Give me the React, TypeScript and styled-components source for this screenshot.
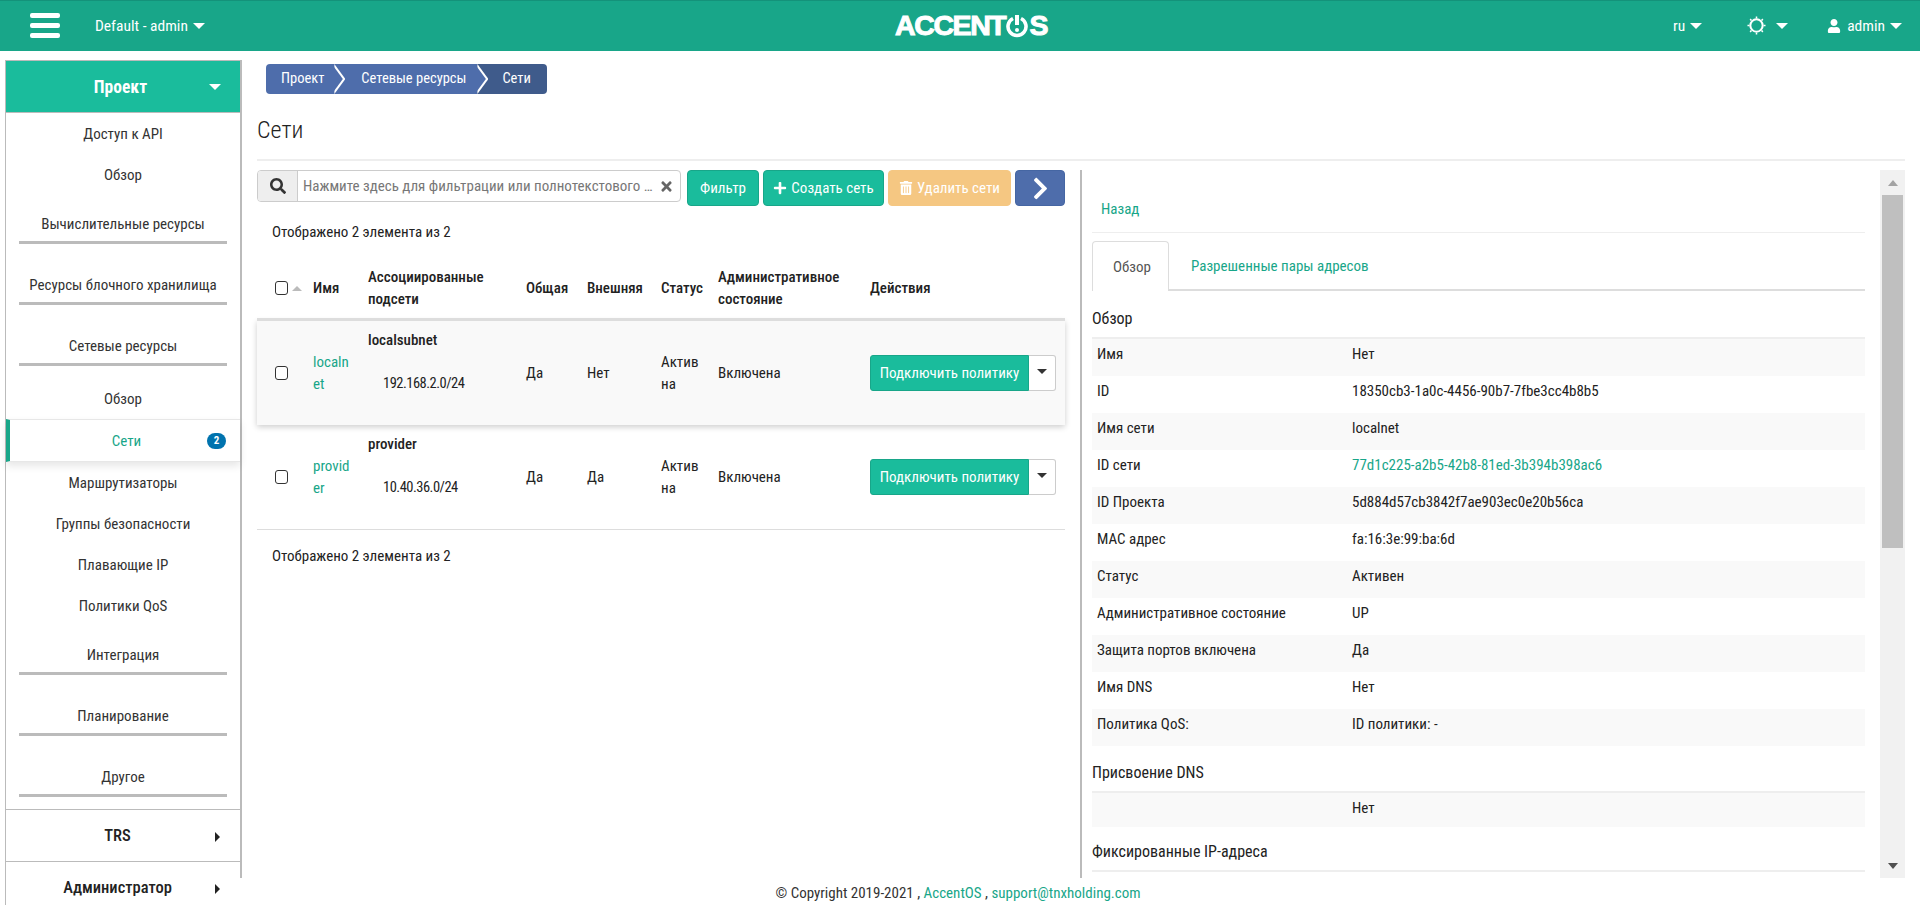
import styled, { createGlobalStyle } from "styled-components";
import { FaChevronRight, FaPlus, FaSearch, FaTimes, FaTrashAlt, FaUser } from "react-icons/fa";

const GlobalStyle = createGlobalStyle`
  html, body {
    margin: 0;
    height: 100%;
    overflow: hidden;
    background: #fff;
    color: #222;
    font-family: "Roboto Condensed", Roboto, "Liberation Sans", sans-serif;
    font-size: 15px;
    line-height: 22px;
  }
  * { box-sizing: border-box; }
  #root { height: 100%; }
`;

const Page = styled.div`
  height: 905px;
  display: flex;
  flex-direction: column;
  overflow: hidden;
`;

const TopBar = styled.header`
  height: 51px;
  flex: none;
  background: #18a689;
  border-top: 1px solid #14927a;
  color: #fff;
  display: grid;
  grid-template-columns: 1fr auto 1fr;
  align-items: center;
  padding: 0 18px 1px 30px;
`;

const TopLeft = styled.div`
  display: flex;
  align-items: center;
`;

const Burger = styled.div`
  width: 30px;
  display: flex;
  flex-direction: column;
  gap: 5px;
  margin-right: 35px;

  span {
    height: 5px;
    border-radius: 2px;
    background: #fff;
  }
`;

const TopText = styled.span<{ $gap?: number }>`
  font-size: 15.5px;
  margin-left: ${({ $gap }) => $gap ?? 0}px;
`;

const Caret = styled.i<{ $size?: number; $color?: string; $gap?: number }>`
  display: inline-block;
  margin-left: ${({ $gap }) => $gap ?? 5}px;
  border-left: ${({ $size }) => $size ?? 6}px solid transparent;
  border-right: ${({ $size }) => $size ?? 6}px solid transparent;
  border-top: ${({ $size }) => $size ?? 6}px solid ${({ $color }) => $color ?? "#fff"};
`;

const Logo = styled.div`
  display: flex;
  align-items: center;
  margin-left: 10px;
  font-family: "Liberation Sans", sans-serif;
  font-weight: 700;
  font-size: 28.5px;
  letter-spacing: -1.4px;
  line-height: 1;
  -webkit-text-stroke: 1px #fff;
`;

const TopRight = styled.div`
  display: flex;
  justify-content: flex-end;
  align-items: center;
`;

const TopMenu = styled.div<{ $gap: number }>`
  display: flex;
  align-items: center;
  margin-left: ${({ $gap }) => $gap}px;
`;

const Body = styled.div`
  flex: 1;
  min-height: 0;
  display: flex;
`;

const Sidebar = styled.nav`
  width: 237px;
  flex: none;
  margin: 9px 0 0 5px;
  border: 1px solid #bbb;
  border-width: 1px 2px 0 1px;
  color: #333;
  text-align: center;
`;

const SideHead = styled.div`
  height: 51px;
  background: #1abc9c;
  color: #fff;
  font-size: 17.5px;
  font-weight: 700;
  display: flex;
  align-items: center;
  justify-content: center;
  position: relative;
  border-bottom: 1px solid #bbb;
  padding-right: 5px;
  box-sizing: content-box;

  i {
    position: absolute;
    right: 19px;
    top: 23px;
  }
`;

const SideItem = styled.div<{ $active?: boolean }>`
  height: ${({ $active }) => ($active ? 43 : 41)}px;
  display: flex;
  align-items: center;
  justify-content: center;
  position: relative;
  ${({ $active }) =>
    $active &&
    `
    color: #18a689;
    border-left: 4px solid #18a689;
    border-top: 1px solid #e7e7e7;
    border-bottom: 1px solid #e7e7e7;
    box-shadow: 0 4px 8px rgba(0, 0, 0, 0.1);
    padding-left: 3px;
  `}
`;

const Badge = styled.span`
  position: absolute;
  right: 14px;
  top: 13px;
  width: 19px;
  height: 16px;
  border-radius: 8px;
  background: #0073ae;
  color: #fff;
  font-size: 11px;
  font-weight: 700;
  line-height: 16px;
`;

const SideGroup = styled.div`
  height: 61px;
  padding-top: 18px;

  span {
    display: block;
    margin: 0 13px;
    padding-bottom: 6px;
    border-bottom: 3px solid #bbb;
  }
`;

const SideSection = styled.div`
  height: 52px;
  padding-right: 11px;
  border-top: 1px solid #bbb;
  font-size: 16.5px;
  font-weight: 500;
  color: #222;
  display: flex;
  align-items: center;
  justify-content: center;
  position: relative;

  i {
    position: absolute;
    right: 20px;
    top: 22px;
    width: 0;
    height: 0;
    border-top: 5px solid transparent;
    border-bottom: 5px solid transparent;
    border-left: 5px solid #222;
  }
`;

const MainColumn = styled.div`
  flex: 1;
  min-width: 0;
  display: flex;
  flex-direction: column;
`;

const Content = styled.main`
  flex: 1;
  min-height: 0;
  padding: 13px 15px 0;
  display: flex;
  flex-direction: column;
`;

const Crumbs = styled.div`
  display: flex;
  height: 30px;
  margin-left: 9px;
  font-size: 14.5px;
`;

const Crumb = styled.div<{ $left: number; $right: number; $last?: boolean }>`
  position: relative;
  padding: 0 ${({ $right }) => $right}px 0 ${({ $left }) => $left}px;
  background: ${({ $last }) => ($last ? "#3f5b8b" : "#4e6dab")};
  color: #fff;
  line-height: 30px;
  &:first-child { border-radius: 4px 0 0 4px; z-index: 2; }
  &:nth-child(2) { z-index: 1; }
  &:last-child { border-radius: 0 4px 4px 0; }

  ${({ $last }) =>
    !$last &&
    `
    &::before, &::after {
      content: "";
      position: absolute;
      top: 0;
      width: 11px;
      height: 30px;
      clip-path: polygon(0 0, 100% 50%, 0 100%);
    }
    &::before {
      left: 100%;
      background: #fff;
    }
    &::after {
      left: calc(100% - 2.5px);
      background: #4e6dab;
    }
  `}
`;

const Title = styled.h1`
  margin: 22px 0 0;
  padding-bottom: 15px;
  border-bottom: 2px solid #eee;
  font-size: 24px;
  font-weight: 300;
  line-height: 28px;
  color: #222;
`;

const Split = styled.div`
  flex: 1;
  min-height: 0;
  display: flex;
  padding-top: 9px;
`;

const ListPane = styled.section`
  width: 808px;
  flex: none;
  margin-right: 15px;
`;

const Toolbar = styled.div`
  display: flex;
  gap: 4px;
  align-items: flex-start;
`;

const SearchBox = styled.div`
  width: 424px;
  height: 32px;
  margin-right: 2px;
  flex: none;
  display: flex;
  align-items: center;
  border: 1px solid #ccc;
  border-radius: 4px;
  background: #fff;

  svg {
    flex: none;
  }
`;

const SearchAddon = styled.div`
  width: 40px;
  height: 100%;
  flex: none;
  display: flex;
  align-items: center;
  justify-content: center;
  background: #eee;
  border-right: 1px solid #ccc;
  border-radius: 3px 0 0 3px;
  color: #333;
`;

const SearchInput = styled.input`
  flex: 1;
  min-width: 0;
  height: 100%;
  border: 0;
  outline: 0;
  padding: 0 6px 0 5px;
  background: transparent;
  font: inherit;
  text-overflow: ellipsis;

  &::placeholder {
    color: #777;
    opacity: 1;
  }
`;

const ClearIcon = styled(FaTimes)`
  color: #666;
  margin-right: 6px;
`;

const Btn = styled.button<{ $bg?: string; $line?: string; $w: number }>`
  width: ${({ $w }) => $w}px;
  height: 36px;
  padding: 0;
  flex: none;
  display: inline-flex;
  align-items: center;
  justify-content: center;
  gap: 4px;
  background: ${({ $bg }) => $bg ?? "#1abc9c"};
  border: 1px solid ${({ $line }) => $line ?? "#18a689"};
  border-radius: 4px;
  color: #fff;
  font: inherit;
`;

const CountLine = styled.div<{ $top: number }>`
  margin: ${({ $top }) => $top}px 0 15px 15px;
`;

const NetTable = styled.table`
  width: 808px;
  table-layout: fixed;
  border-collapse: collapse;
  border-bottom: 1px solid #ddd;

  th {
    padding: 8px;
    text-align: left;
    font-weight: 500;
    vertical-align: middle;
  }

  td {
    padding: 8px;
    vertical-align: middle;
    word-break: break-all;
  }
`;

const NetRow = styled.tr<{ $hover?: boolean }>`
  ${({ $hover }) =>
    $hover &&
    `
    background: #f9f9f9;
    border-top: 3px solid #ddd;
    box-shadow: 0 2px 6px rgba(0, 0, 0, 0.2);
  `}
`;

const Check = styled.input.attrs({ type: "checkbox" })`
  appearance: none;
  display: block;
  flex: none;
  width: 13px;
  height: 14px;
  margin: 0;
  border: 1.5px solid #333;
  border-radius: 3px;
  background: #fff;
`;

const CheckHead = styled.div`
  display: flex;
  align-items: center;
  gap: 4px;
  padding-left: 10px;
  margin-right: -10px;
`;

const CheckCell = styled.div`
  padding-left: 10px;
`;

const SortUp = styled.i`
  flex: none;
  width: 0;
  height: 0;
  border-left: 5px solid transparent;
  border-right: 5px solid transparent;
  border-bottom: 5px solid #bbb;
`;

const GreenLink = styled.a`
  color: #18a689;
`;

const SubnetName = styled.div`
  font-weight: 500;
`;

const SubnetAddr = styled.div`
  margin: 22px 0 22px 15px;
  font-size: 14.5px;
  letter-spacing: -0.5px;
`;

const ActionGroup = styled.div`
  display: flex;
  width: 186px;
  height: 36px;
`;

const ActionMain = styled.button`
  width: 159px;
  height: 36px;
  background: #1abc9c;
  border: 1px solid #18a689;
  border-radius: 3px 0 0 3px;
  color: #fff;
  font: inherit;
  padding: 0;
`;

const ActionToggle = styled.button`
  flex: 1;
  background: #fff;
  border: 1px solid #ccc;
  border-left: 0;
  border-radius: 0 3px 3px 0;
  padding: 0 0 4px;
  display: flex;
  align-items: center;
  justify-content: center;
`;

const DetailPane = styled.section`
  flex: 1;
  min-width: 0;
  display: flex;
  border-left: 2px solid #bbb;
  padding-left: 10px;
`;

const DetailBody = styled.div`
  flex: 1;
  min-width: 0;
  overflow: hidden;
  margin-right: 15px;
  padding-top: 28px;
`;

const BackLink = styled.a`
  display: block;
  color: #18a689;
  padding: 0 0 12px 9px;
  border-bottom: 1px solid #eee;
`;

const Tabs = styled.div`
  display: flex;
  height: 50px;
  margin-top: 8px;
  border-bottom: 2px solid #ddd;
`;

const Tab = styled.div<{ $active?: boolean }>`
  height: 50px;
  padding: 14px 22px 0;
  ${({ $active }) =>
    $active
      ? `
    color: #555;
    background: #fff;
    border: 1px solid #ddd;
    border-bottom: 0;
    border-radius: 4px 4px 0 0;
    width: 77px;
    padding-left: 20px;
    padding-right: 0;
  `
      : "color: #18a689;"}
`;

const SectionTitle = styled.h3<{ $top: number }>`
  margin: ${({ $top }) => $top}px 0 7px;
  font-size: 16px;
  font-weight: 400;
  line-height: 22px;
  color: #222;
`;

const Rows = styled.div`
  border-top: 2px solid #eee;
`;

const InfoRow = styled.div<{ $short?: boolean }>`
  display: grid;
  grid-template-columns: 255px 1fr;
  height: ${({ $short }) => ($short ? 34 : 37)}px;
  padding: 4px 5px 0;

  &:nth-child(odd) {
    background: #f9f9f9;
  }
`;

const ScrollTrack = styled.div`
  width: 25px;
  flex: none;
  background: #f1f1f1;
  display: flex;
  flex-direction: column;
  align-items: center;
`;

const ScrollButton = styled.div`
  height: 25px;
  flex: none;
  display: flex;
  align-items: center;
  justify-content: center;
`;

const ArrowUp = styled.i`
  border-left: 5px solid transparent;
  border-right: 5px solid transparent;
  border-bottom: 6px solid #a3a3a3;
`;

const ArrowDown = styled.i`
  border-left: 5px solid transparent;
  border-right: 5px solid transparent;
  border-top: 6px solid #505050;
`;

const ScrollThumb = styled.div`
  width: 21px;
  height: 353px;
  flex: none;
  background: #bfbfbf;
`;

const ScrollRest = styled.div`
  flex: 1;
`;

const Foot = styled.footer`
  height: 27px;
  flex: none;
  margin-left: -2px;
  padding: 2px 244px 0 0;
  position: relative;
  background: #fff;
  display: flex;
  align-items: center;
  justify-content: center;
  white-space: pre;
  color: #333;
`;

const sideTop = ["Доступ к API", "Обзор"];
const sideGroups = ["Вычислительные ресурсы", "Ресурсы блочного хранилища", "Сетевые ресурсы"];
const sideNet = ["Маршрутизаторы", "Группы безопасности", "Плавающие IP", "Политики QoS"];
const sideBottom = ["Интеграция", "Планирование", "Другое"];

const networks = [
  { name: "localnet", subnet: "localsubnet", cidr: "192.168.2.0/24", external: "Нет", hover: true },
  { name: "provider", subnet: "provider", cidr: "10.40.36.0/24", external: "Да", hover: false },
];

const overview: [string, string, boolean?][] = [
  ["Имя", "Нет"],
  ["ID", "18350cb3-1a0c-4456-90b7-7fbe3cc4b8b5"],
  ["Имя сети", "localnet"],
  ["ID сети", "77d1c225-a2b5-42b8-81ed-3b394b398ac6", true],
  ["ID Проекта", "5d884d57cb3842f7ae903ec0e20b56ca"],
  ["MAC адрес", "fa:16:3e:99:ba:6d"],
  ["Статус", "Активен"],
  ["Административное состояние", "UP"],
  ["Защита портов включена", "Да"],
  ["Имя DNS", "Нет"],
  ["Политика QoS:", "ID политики: -"],
];

function LogoPower() {
  return (
    <svg width="24" height="24" viewBox="0 0 24 24" fill="none" stroke="#fff">
      <path d="M8 4.5a9 9 0 1 0 8 0" strokeWidth="3.6" />
      <path d="M12 1v10" strokeWidth="4" />
      <circle cx="12" cy="16" r="2" fill="#fff" stroke="none" />
    </svg>
  );
}

// ring with short rays, the theme switcher in the top bar
function SunIcon() {
  return (
    <svg width="19" height="19" viewBox="0 0 20 20" fill="none" stroke="#fff">
      <circle cx="10" cy="10" r="6.5" strokeWidth="2.2" />
      <path
        d="M10 0.5v2M10 17.5v2M0.5 10h2M17.5 10h2M3.3 3.3l1.4 1.4M15.3 15.3l1.4 1.4M3.3 16.7l1.4-1.4M15.3 4.7l1.4-1.4"
        strokeWidth="1.6"
      />
    </svg>
  );
}

export default function App() {
  return (
    <Page>
      <GlobalStyle />
      <TopBar>
        <TopLeft>
          <Burger>
            <span />
            <span />
            <span />
          </Burger>
          <TopText>Default - admin</TopText>
          <Caret />
        </TopLeft>
        <Logo>
          ACCENT
          <LogoPower />S
        </Logo>
        <TopRight>
          <TopMenu $gap={0}>
            <TopText>ru</TopText>
            <Caret />
          </TopMenu>
          <TopMenu $gap={45}>
            <SunIcon />
            <Caret $gap={10} />
          </TopMenu>
          <TopMenu $gap={39}>
            <FaUser size={14} />
            <TopText $gap={6}>admin</TopText>
            <Caret />
          </TopMenu>
        </TopRight>
      </TopBar>

      <Body>
        <Sidebar>
          <SideHead>
            Проект
            <Caret />
          </SideHead>
          {sideTop.map((s) => (
            <SideItem key={s}>{s}</SideItem>
          ))}
          {sideGroups.map((s) => (
            <SideGroup key={s}>
              <span>{s}</span>
            </SideGroup>
          ))}
          <SideItem>Обзор</SideItem>
          <SideItem $active>
            Сети
            <Badge>2</Badge>
          </SideItem>
          {sideNet.map((s) => (
            <SideItem key={s}>{s}</SideItem>
          ))}
          {sideBottom.map((s) => (
            <SideGroup key={s}>
              <span>{s}</span>
            </SideGroup>
          ))}
          <SideSection>
            TRS
            <i />
          </SideSection>
          <SideSection>
            Администратор
            <i />
          </SideSection>
        </Sidebar>

        <MainColumn>
          <Content>
            <Crumbs>
              <Crumb $left={15} $right={10}>
                Проект
              </Crumb>
              <Crumb $left={27} $right={11}>
                Сетевые ресурсы
              </Crumb>
              <Crumb $left={25} $right={16} $last>
                Сети
              </Crumb>
            </Crumbs>
            <Title>Сети</Title>

            <Split>
              <ListPane>
                <Toolbar>
                  <SearchBox>
                    <SearchAddon>
                      <FaSearch size={16} />
                    </SearchAddon>
                    <SearchInput placeholder="Нажмите здесь для фильтрации или полнотекстового поиска" />
                    <ClearIcon size={15} />
                  </SearchBox>
                  <Btn $w={72}>Фильтр</Btn>
                  <Btn $w={121}>
                    <FaPlus size={14} />
                    Создать сеть
                  </Btn>
                  <Btn $w={123} $bg="#f5c782" $line="#f5c782">
                    <FaTrashAlt size={14} />
                    Удалить сети
                  </Btn>
                  <Btn $w={50} $bg="#4e6dab" $line="#4566a3">
                    <FaChevronRight size={25} />
                  </Btn>
                </Toolbar>

                <CountLine $top={15}>Отображено 2 элемента из 2</CountLine>

                <NetTable>
                  <colgroup>
                    <col width={48} />
                    <col width={55} />
                    <col width={158} />
                    <col width={61} />
                    <col width={74} />
                    <col width={57} />
                    <col width={152} />
                    <col width={203} />
                  </colgroup>
                  <thead>
                    <tr>
                      <th>
                        <CheckHead>
                          <Check />
                          <SortUp />
                        </CheckHead>
                      </th>
                      <th>Имя</th>
                      <th>Ассоциированные подсети</th>
                      <th>Общая</th>
                      <th>Внешняя</th>
                      <th>Статус</th>
                      <th>Административное состояние</th>
                      <th>Действия</th>
                    </tr>
                  </thead>
                  <tbody>
                    {networks.map((n) => (
                      <NetRow key={n.name} $hover={n.hover}>
                        <td>
                          <CheckCell>
                            <Check />
                          </CheckCell>
                        </td>
                        <td>
                          <GreenLink>{n.name}</GreenLink>
                        </td>
                        <td>
                          <SubnetName>{n.subnet}</SubnetName>
                          <SubnetAddr>{n.cidr}</SubnetAddr>
                        </td>
                        <td>Да</td>
                        <td>{n.external}</td>
                        <td>Активна</td>
                        <td>Включена</td>
                        <td>
                          <ActionGroup>
                            <ActionMain>Подключить политику</ActionMain>
                            <ActionToggle>
                              <Caret $size={5} $color="#333" $gap={0} />
                            </ActionToggle>
                          </ActionGroup>
                        </td>
                      </NetRow>
                    ))}
                  </tbody>
                </NetTable>

                <CountLine $top={15}>Отображено 2 элемента из 2</CountLine>
              </ListPane>

              <DetailPane>
                <DetailBody>
                  <BackLink>Назад</BackLink>
                  <Tabs>
                    <Tab $active>Обзор</Tab>
                    <Tab>Разрешенные пары адресов</Tab>
                  </Tabs>

                  <SectionTitle $top={17}>Обзор</SectionTitle>
                  <Rows>
                    {overview.map(([label, value, link]) => (
                      <InfoRow key={label}>
                        <span>{label}</span>
                        {link ? <GreenLink>{value}</GreenLink> : <span>{value}</span>}
                      </InfoRow>
                    ))}
                  </Rows>

                  <SectionTitle $top={16}>Присвоение DNS</SectionTitle>
                  <Rows>
                    <InfoRow $short>
                      <span />
                      <span>Нет</span>
                    </InfoRow>
                  </Rows>

                  <SectionTitle $top={14}>Фиксированные IP-адреса</SectionTitle>
                  <Rows />
                </DetailBody>
                <ScrollTrack>
                  <ScrollButton>
                    <ArrowUp />
                  </ScrollButton>
                  <ScrollThumb />
                  <ScrollRest />
                  <ScrollButton>
                    <ArrowDown />
                  </ScrollButton>
                </ScrollTrack>
              </DetailPane>
            </Split>
          </Content>

          <Foot>
            © Copyright 2019-2021 , <GreenLink>AccentOS</GreenLink> , <GreenLink>support@tnxholding.com</GreenLink>
          </Foot>
        </MainColumn>
      </Body>
    </Page>
  );
}
